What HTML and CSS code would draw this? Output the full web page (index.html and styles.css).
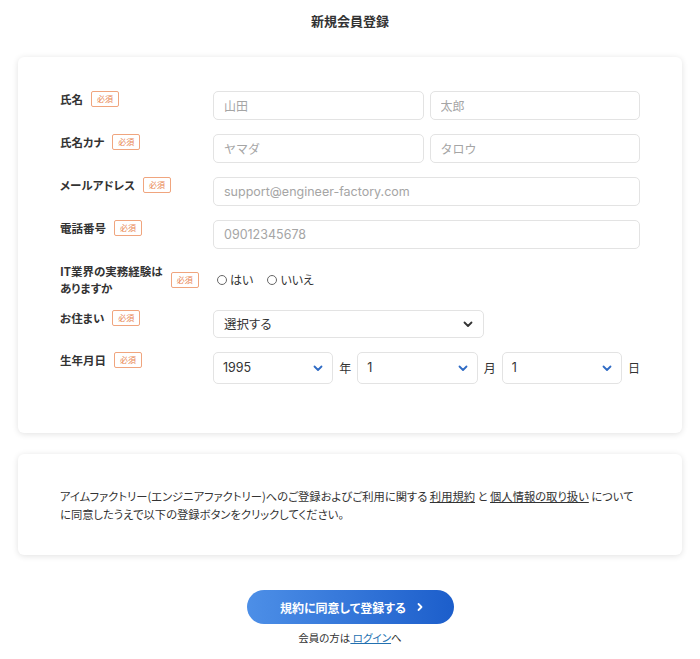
FILE: index.html
```html
<!DOCTYPE html>
<html lang="ja">
<head>
<meta charset="utf-8">
<title>新規会員登録</title>
<link rel="stylesheet" href="styles.css">
</head>
<body>
<main class="page">
  <h1 class="title">新規会員登録</h1>

  <section class="card form-card">
    <div class="row">
      <div class="label"><span class="label-text">氏名</span><span class="badge">必須</span></div>
      <div class="field pair">
        <input class="input" type="text" placeholder="山田">
        <input class="input" type="text" placeholder="太郎">
      </div>
    </div>

    <div class="row">
      <div class="label"><span class="label-text">氏名カナ</span><span class="badge">必須</span></div>
      <div class="field pair">
        <input class="input" type="text" placeholder="ヤマダ">
        <input class="input" type="text" placeholder="タロウ">
      </div>
    </div>

    <div class="row">
      <div class="label"><span class="label-text">メールアドレス</span><span class="badge">必須</span></div>
      <div class="field">
        <input class="input input-latin" type="text" placeholder="support@engineer-factory.com">
      </div>
    </div>

    <div class="row">
      <div class="label"><span class="label-text">電話番号</span><span class="badge">必須</span></div>
      <div class="field">
        <input class="input input-latin" type="text" placeholder="09012345678">
      </div>
    </div>

    <div class="row row-center">
      <div class="label"><span class="label-text two-line">IT業界の実務経験は<br>ありますか</span><span class="badge">必須</span></div>
      <div class="field radios">
        <span class="radio"><span class="radio-dot"></span>はい</span>
        <span class="radio"><span class="radio-dot"></span>いいえ</span>
      </div>
    </div>

    <div class="row">
      <div class="label"><span class="label-text">お住まい</span><span class="badge">必須</span></div>
      <div class="field">
        <div class="select select-wide">
          <span>選択する</span>
          <svg class="chev" width="10" height="7" viewBox="0 0 10 7"><polyline points="1.5,1.5 5,5 8.5,1.5" fill="none" stroke="#333" stroke-width="1.8" stroke-linecap="round" stroke-linejoin="round"/></svg>
        </div>
      </div>
    </div>

    <div class="row">
      <div class="label"><span class="label-text">生年月日</span><span class="badge">必須</span></div>
      <div class="field dates">
        <div class="select select-date">
          <span class="num">1995</span>
          <svg class="chev" width="10" height="7" viewBox="0 0 10 7"><polyline points="1.5,1.5 5,5 8.5,1.5" fill="none" stroke="#2f6bc4" stroke-width="1.8" stroke-linecap="round" stroke-linejoin="round"/></svg>
        </div>
        <span class="unit">年</span>
        <div class="select select-date">
          <span class="num">1</span>
          <svg class="chev" width="10" height="7" viewBox="0 0 10 7"><polyline points="1.5,1.5 5,5 8.5,1.5" fill="none" stroke="#2f6bc4" stroke-width="1.8" stroke-linecap="round" stroke-linejoin="round"/></svg>
        </div>
        <span class="unit">月</span>
        <div class="select select-date">
          <span class="num">1</span>
          <svg class="chev" width="10" height="7" viewBox="0 0 10 7"><polyline points="1.5,1.5 5,5 8.5,1.5" fill="none" stroke="#2f6bc4" stroke-width="1.8" stroke-linecap="round" stroke-linejoin="round"/></svg>
        </div>
        <span class="unit">日</span>
      </div>
    </div>
  </section>

  <section class="card terms-card">
    <p class="terms"><span class="terms-line">アイムファクトリー(エンジニアファクトリー)へのご登録およびご利用に関する <a class="link" href="#">利用規約</a> と <a class="link" href="#">個人情報の取り扱い</a> について</span><span class="terms-line">に同意したうえで以下の登録ボタンをクリックしてください。</span></p>
  </section>

  <div class="actions">
    <button class="submit" type="button"><span>規約に同意して登録する</span><svg class="submit-arrow" width="8" height="10" viewBox="0 0 8 10"><polyline points="2.5,2 5.5,5 2.5,8" fill="none" stroke="#fff" stroke-width="1.8" stroke-linecap="round" stroke-linejoin="round"/></svg></button>
    <p class="login">会員の方は<a class="login-link" href="#"> ログイン</a>へ</p>
  </div>
</main>
</body>
</html>
```

FILE: styles.css
```css
* { box-sizing: border-box; }

html, body {
  margin: 0;
  padding: 0;
  background: #fff;
}

body {
  font-family: "Noto Sans CJK JP", "Noto Sans", sans-serif;
  color: #333;
  font-feature-settings: "palt";
}

.page {
  padding: 11px 18px 0;
}

.title {
  margin: 0;
  text-align: center;
  font-size: 13px;
  line-height: 20px;
  font-weight: 700;
  color: #333;
}

.card {
  background: #fff;
  border-radius: 6px;
  box-shadow: 0 1px 6px rgba(0, 0, 0, 0.12);
}

.form-card {
  margin-top: 26px;
  padding: 34px 42px 49px;
  display: flex;
  flex-direction: column;
  gap: 14px;
}

.row {
  display: flex;
  align-items: flex-start;
}

.row-center {
  align-items: center;
}

.label {
  width: 153px;
  flex: none;
  display: flex;
  align-items: center;
  gap: 8px;
}

.label-text {
  display: block;
  font-size: 11.5px;
  font-weight: 700;
  line-height: 16px;
  color: #333;
}

.label-text.two-line {
  line-height: 16.5px;
}

.badge {
  display: block;
  border: 1px solid #f0a57e;
  border-radius: 2px;
  color: #e88450;
  font-size: 8px;
  line-height: 14px;
  height: 16px;
  padding: 0 5px;
  font-weight: 400;
}

.field {
  flex: 1;
  min-width: 0;
}

.pair {
  display: flex;
  gap: 6px;
}

.input {
  display: block;
  width: 100%;
  height: 29px;
  border: 1px solid #e3e3e3;
  border-radius: 5px;
  padding: 0 10px;
  font-family: "Noto Sans CJK JP", sans-serif;
  font-size: 12px;
  color: #333;
  background: #fff;
  outline: none;
}

.input::placeholder {
  color: #a5a5a5;
}

.input-latin {
  font-family: Inter, "Noto Sans CJK JP", sans-serif;
  font-size: 12.5px;
  padding-left: 10px;
}

.radios {
  display: flex;
  gap: 14px;
  padding-left: 4px;
  font-size: 12px;
  line-height: 16px;
}

.radio {
  display: inline-flex;
  align-items: center;
  gap: 3px;
  color: #333;
}

.radio-dot {
  width: 10px;
  height: 10px;
  border: 1px solid #666;
  border-radius: 50%;
}

.select {
  height: 28px;
  border: 1px solid #e3e3e3;
  border-radius: 5px;
  padding: 0 10px;
  display: flex;
  align-items: center;
  justify-content: space-between;
  font-size: 12.5px;
  line-height: 16px;
  color: #333;
  background: #fff;
}

.select-wide {
  width: 271px;
}

.select-date {
  height: 32px;
  flex: 1;
  padding-left: 9px;
  padding-right: 9px;
}

.num {
  font-family: Inter, sans-serif;
  font-size: 12.5px;
}

.dates {
  display: flex;
  align-items: center;
  gap: 6px;
}

.unit {
  font-size: 12px;
  line-height: 16px;
  color: #333;
  width: 12px;
  flex: none;
}

.terms-card {
  margin-top: 21px;
  padding: 33px 42px 32px;
}

.terms {
  margin: 0;
  font-size: 11.3px;
  line-height: 18px;
  color: #333;
}

.terms-line {
  display: block;
  white-space: nowrap;
}

.link {
  color: #333;
  text-decoration: underline;
}

.actions {
  display: flex;
  flex-direction: column;
  align-items: center;
  margin-top: 35px;
}

.submit {
  width: 207px;
  height: 34px;
  border: none;
  border-radius: 17px;
  background: linear-gradient(90deg, #4d8fe7 0%, #1c5ecb 100%);
  color: #fff;
  font-family: "Noto Sans CJK JP", sans-serif;
  font-feature-settings: "palt";
  font-size: 12px;
  font-weight: 700;
  display: flex;
  align-items: center;
  justify-content: center;
  gap: 10px;
  padding: 0 0 0 4px;
}

.submit-arrow {
  display: block;
}

.login {
  margin: 6px 0 0;
  font-size: 10.5px;
  line-height: 16px;
  color: #333;
}

.login-link {
  color: #2270b0;
  text-decoration: underline;
}
```
